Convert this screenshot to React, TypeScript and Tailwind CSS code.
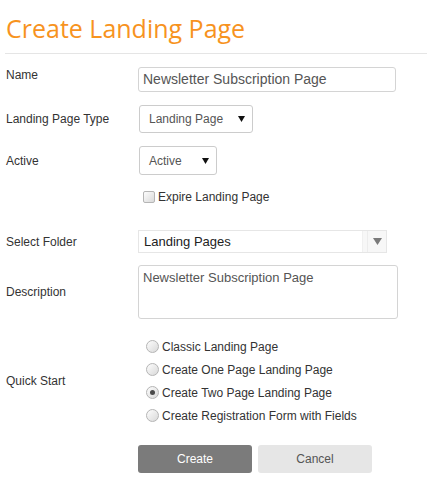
import React from "react";

function Radio({ checked, label }: { checked?: boolean; label: string }) {
  return (
    <div className="flex items-center h-[13px]">
      <span className="relative w-[13px] h-[13px] rounded-full border border-[#b5b5b5] bg-gradient-to-br from-[#fdfdfd] to-[#d9d9d9] flex items-center justify-center shrink-0">
        {checked && <span className="w-[5px] h-[5px] rounded-full bg-[#4a4a4a]" />}
      </span>
      <span className="ml-[3px] text-[12px] text-[#333]">{label}</span>
    </div>
  );
}

function Arrow() {
  return (
    <svg width="7" height="6" viewBox="0 0 7 6" className="shrink-0">
      <path d="M0 0 H7 L3.5 6 Z" fill="#111" />
    </svg>
  );
}

export default function App() {
  const font = { fontFamily: '"Liberation Sans", Arial, sans-serif' };
  return (
    <div className="w-[427px] h-[492px] bg-white" style={font}>
      <div className="pl-[5px]">
        <div className="h-[54px] border-b border-[#e5e5e5] flex items-start">
          <h1
            className="text-[25px] leading-[25px] text-[#f7931e] mt-[16px] ml-[1px]"
            style={{ fontFamily: '"Open Sans", sans-serif' }}
          >
            Create Landing Page
          </h1>
        </div>
      </div>
      <div className="pl-[6px] text-[12px] text-[#333]">
        {/* Name */}
        <div className="flex items-start mt-[13px]">
          <div className="w-[132px] leading-[13px] pt-[2px]">Name</div>
          <div className="w-[258px] h-[25px] border border-[#d4d4d4] rounded-[3px] flex items-center px-[4px] text-[14px] text-[#555]">
            Newsletter Subscription Page
          </div>
        </div>
        {/* Landing Page Type */}
        <div className="flex items-center mt-[13px]">
          <div className="w-[133px]">Landing Page Type</div>
          <div className="w-[114px] h-[28px] border border-[#ccc] rounded-[3px] flex items-center justify-between pl-[9px] pr-[7px] text-[#555]">
            <span>Landing Page</span>
            <Arrow />
          </div>
        </div>
        {/* Active */}
        <div className="flex items-center mt-[13px]">
          <div className="w-[133px]">Active</div>
          <div className="w-[78px] h-[29px] border border-[#ccc] rounded-[3px] flex items-center justify-between pl-[9px] pr-[7px] text-[#555]">
            <span>Active</span>
            <Arrow />
          </div>
        </div>
        {/* Expire */}
        <div className="flex items-center mt-[15px] ml-[137px] h-[13px]">
          <span className="w-[12px] h-[12px] rounded-[2px] border border-[#b5b5b5] bg-gradient-to-br from-[#fdfdfd] to-[#d9d9d9] shrink-0" />
          <span className="ml-[3px]">Expire Landing Page</span>
        </div>
        {/* Select Folder */}
        <div className="flex items-center mt-[27px]">
          <div className="w-[132px]">Select Folder</div>
          <div className="w-[249px] h-[23px] border border-[#e6e6e6] bg-[#f7f7f7] flex">
            <div className="flex-1 bg-white border-r border-[#f0f0f0] flex items-center pl-[5px] text-[13px] text-[#222]">
              Landing Pages
            </div>
            <div className="w-[4px]" />
            <div className="w-[19px] border-l border-[#ececec] flex items-center justify-center">
              <svg width="9" height="7" viewBox="0 0 9 7">
                <path d="M0 0 H9 L4.5 7 Z" fill="#7a7a7a" />
              </svg>
            </div>
          </div>
        </div>
        {/* Description */}
        <div className="flex items-center mt-[12px]">
          <div className="w-[132px]">Description</div>
          <div className="w-[260px] h-[54px] border border-[#d4d4d4] rounded-[3px] px-[4px] pt-[4px] text-[13px] leading-[15px] text-[#555]">
            Newsletter Subscription Page
          </div>
        </div>
        {/* Quick Start */}
        <div className="flex items-center mt-[21px]">
          <div className="w-[140px]">Quick Start</div>
          <div className="flex flex-col gap-[10px]">
            <Radio label="Classic Landing Page" />
            <Radio label="Create One Page Landing Page" />
            <Radio checked label="Create Two Page Landing Page" />
            <Radio label="Create Registration Form with Fields" />
          </div>
        </div>
        {/* Buttons */}
        <div className="flex mt-[23px] ml-[132px] gap-[6px]">
          <button className="w-[114px] h-[28px] rounded-[3px] bg-[#7b7b7b] text-white text-[12px]">
            Create
          </button>
          <button className="w-[114px] h-[28px] rounded-[3px] bg-[#e6e6e6] text-[#555] text-[12px]">
            Cancel
          </button>
        </div>
      </div>
    </div>
  );
}
